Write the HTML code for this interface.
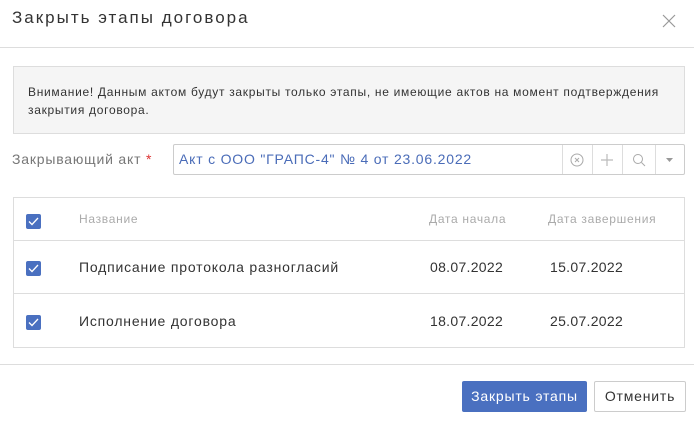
<!DOCTYPE html>
<html><head><meta charset="utf-8"><style>
*{box-sizing:border-box;margin:0;padding:0}
body{width:694px;height:422px;background:#fff;font-family:"Liberation Sans","Noto Sans CJK SC",sans-serif;color:#333;position:relative;overflow:hidden;letter-spacing:0.8px}
.abs{position:absolute}
.cb{position:absolute;width:15px;height:15px;background:#4a70c0;border-radius:2px}
.cb svg{position:absolute;left:2px;top:3px}
</style></head><body>
<div class="abs" style="left:12px;top:8px;font-size:17px;color:#333;letter-spacing:2px">Закрыть этапы договора</div>
<svg class="abs" style="left:662px;top:14px" width="14" height="14"><path d="M1 1L13 13M13 1L1 13" stroke="#999" stroke-width="1.2"/></svg>
<div class="abs" style="left:0;top:47px;width:694px;height:1px;background:#ddd"></div>
<div class="abs" style="left:13px;top:66px;width:672px;height:68px;background:#f5f5f5;border:1px solid #ddd;font-size:12px;line-height:18px;padding:16px 14px 0 14px;color:#333;letter-spacing:0.7px">Внимание! Данным актом будут закрыты только этапы, не имеющие актов на момент подтверждения закрытия договора.</div>
<div class="abs" style="left:12px;top:151px;font-size:14px;color:#777">Закрывающий акт <span style="color:#d33">*</span></div>
<div class="abs" style="left:173px;top:144px;width:512px;height:31px;border:1px solid #ccc;border-radius:2px"></div>
<div class="abs" style="left:179px;top:151px;font-size:14px;color:#4a6cb8">Акт с ООО "ГРАПС-4" № 4 от 23.06.2022</div>
<div class="abs" style="left:562px;top:145px;width:1px;height:29px;background:#ddd"></div>
<div class="abs" style="left:592px;top:145px;width:1px;height:29px;background:#ddd"></div>
<div class="abs" style="left:622px;top:145px;width:1px;height:29px;background:#ddd"></div>
<div class="abs" style="left:655px;top:145px;width:1px;height:29px;background:#ddd"></div>
<svg class="abs" style="left:570px;top:153px" width="14" height="14"><circle cx="7" cy="7" r="6" fill="none" stroke="#aaa"/><path d="M5 5L9 9M9 5L5 9" stroke="#aaa"/></svg>
<svg class="abs" style="left:600px;top:153px" width="14" height="14"><path d="M7 1V13M1 7H13" stroke="#bbb" stroke-width="1.2"/></svg>
<svg class="abs" style="left:632px;top:153px" width="14" height="14"><circle cx="6" cy="6" r="4.5" fill="none" stroke="#aaa"/><path d="M9.5 9.5L13 13" stroke="#aaa"/></svg>
<svg class="abs" style="left:666px;top:157px" width="8" height="6"><path d="M0 1H7L3.5 5Z" fill="#999"/></svg>
<div class="abs" style="left:13px;top:197px;width:672px;height:151px;border:1px solid #ddd"></div>
<div class="abs" style="left:14px;top:240px;width:670px;height:1px;background:#ddd"></div>
<div class="abs" style="left:14px;top:293px;width:670px;height:1px;background:#ddd"></div>
<div class="cb" style="left:26px;top:214px"><svg width="11" height="9"><path d="M1 4.5L4 7.5L10 1" stroke="#fff" fill="none" stroke-width="1.3"/></svg></div>
<div class="cb" style="left:26px;top:261px"><svg width="11" height="9"><path d="M1 4.5L4 7.5L10 1" stroke="#fff" fill="none" stroke-width="1.3"/></svg></div>
<div class="cb" style="left:26px;top:315px"><svg width="11" height="9"><path d="M1 4.5L4 7.5L10 1" stroke="#fff" fill="none" stroke-width="1.3"/></svg></div>
<div class="abs" style="left:79px;top:212px;font-size:12px;color:#aaa;letter-spacing:0.7px">Название</div>
<div class="abs" style="left:429px;top:212px;font-size:12px;color:#aaa;letter-spacing:0.7px">Дата начала</div>
<div class="abs" style="left:548px;top:212px;font-size:12px;color:#aaa;letter-spacing:0.7px">Дата завершения</div>
<div class="abs" style="left:79px;top:259px;font-size:14px">Подписание протокола разногласий</div>
<div class="abs" style="left:430px;top:259px;font-size:14px;letter-spacing:0.3px">08.07.2022</div>
<div class="abs" style="left:550px;top:259px;font-size:14px;letter-spacing:0.3px">15.07.2022</div>
<div class="abs" style="left:79px;top:313px;font-size:14px">Исполнение договора</div>
<div class="abs" style="left:430px;top:313px;font-size:14px;letter-spacing:0.3px">18.07.2022</div>
<div class="abs" style="left:550px;top:313px;font-size:14px;letter-spacing:0.3px">25.07.2022</div>
<div class="abs" style="left:0;top:364px;width:694px;height:1px;background:#ddd"></div>
<div class="abs" style="left:462px;top:381px;width:125px;height:31px;background:#4a70c0;border-radius:2px;color:#fff;font-size:14px;text-align:center;line-height:31px">Закрыть этапы</div>
<div class="abs" style="left:594px;top:381px;width:92px;height:31px;border:1px solid #ccc;border-radius:2px;color:#333;font-size:14px;text-align:center;line-height:29px">Отменить</div>
</body></html>
